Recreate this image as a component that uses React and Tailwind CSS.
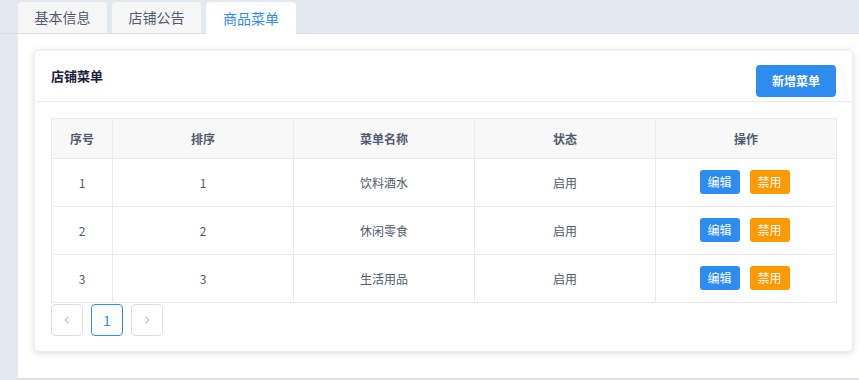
import React from 'react';

const rows = [
    { id: 1, sort: 1, name: '饮料酒水', status: '启用' },
    { id: 2, sort: 2, name: '休闲零食', status: '启用' },
    { id: 3, sort: 3, name: '生活用品', status: '启用' },
];

const tabs = ['基本信息', '店铺公告', '商品菜单'];

const App = () => {
    return (
        <div className="w-[859px] h-[380px] bg-[#e3e7ef] flex flex-col overflow-hidden" style={{ fontFamily: '"Noto Sans CJK SC", "Noto Sans", sans-serif' }}>
            {/* Tabs */}
            <div className="flex pl-[18px] pt-[2px] gap-[5px] h-[34px] border-b border-[#d7dbe2]">
                {tabs.map((t, i) => (
                    <div
                        key={t}
                        className={
                            i === 2
                                ? 'w-[90px] rounded-t-[4px] bg-white text-[#2d8cf0] text-[14px] flex items-center justify-center -mb-px h-[33px]'
                                : 'w-[89px] h-[31px] rounded-t-[4px] bg-[#f6f6f7] text-[#515a6e] text-[14px] flex items-center justify-center'
                        }
                    >
                        {t}
                    </div>
                ))}
            </div>

            {/* Content */}
            <div className="ml-[18px] bg-white h-[345px] border-b border-[#dcdee2] pt-[16px] pl-[16px] pr-[6px]">
                <div className="bg-white rounded-[4px] border border-[#eceef2] shadow-[0_1px_6px_rgba(0,0,0,0.15)] h-[302px]">
                    <div className="h-[51px] flex items-center justify-between pl-[16px] pr-[16px] border-b border-[#e8eaec]">
                        <span className="text-[13px] font-bold text-[#17233d]">店铺菜单</span>
                        <button className="w-[80px] h-[32px] mt-[10px] rounded-[4px] bg-[#2d8cf0] text-white text-[12px] font-bold">新增菜单</button>
                    </div>

                    <div className="pl-[16px] pr-[16px] pt-[16px]">
                        <table className="w-[786px] border-collapse border border-[#dcdee2] text-[12px] text-[#515a6e] table-fixed">
                            <colgroup>
                                <col className="w-[61px]" />
                                <col className="w-[181px]" />
                                <col className="w-[181px]" />
                                <col className="w-[181px]" />
                                <col className="w-[181px]" />
                            </colgroup>
                            <thead>
                                <tr className="h-[40px] bg-[#f8f8f9]">
                                    {['序号', '排序', '菜单名称', '状态', '操作'].map(h => (
                                        <th key={h} className="border border-[#e8eaec] font-bold text-center">{h}</th>
                                    ))}
                                </tr>
                            </thead>
                            <tbody>
                                {rows.map(r => (
                                    <tr key={r.id} className="h-[48px]">
                                        <td className="border border-[#e8eaec] text-center">{r.id}</td>
                                        <td className="border border-[#e8eaec] text-center">{r.sort}</td>
                                        <td className="border border-[#e8eaec] text-center">{r.name}</td>
                                        <td className="border border-[#e8eaec] text-center">{r.status}</td>
                                        <td className="border border-[#e8eaec] text-center">
                                            <div className="flex justify-center gap-[10px] pr-[3px] -mt-[2px]">
                                                <button className="w-[40px] h-[24px] rounded-[3px] bg-[#2d8cf0] text-white text-[12px]">编辑</button>
                                                <button className="w-[40px] h-[24px] rounded-[3px] bg-[#ff9900] text-white text-[12px]">禁用</button>
                                            </div>
                                        </td>
                                    </tr>
                                ))}
                            </tbody>
                        </table>

                        {/* Pagination */}
                        <div className="flex gap-[8px] mt-px">
                            <div className="w-[32px] h-[32px] rounded-[4px] border border-[#dcdee2] flex items-center justify-center text-[#c5c8ce]">
                                <svg width="10" height="10" viewBox="0 0 10 10"><path d="M6.5 1.5 L3 5 L6.5 8.5" fill="none" stroke="currentColor" strokeWidth="1.3" /></svg>
                            </div>
                            <div className="w-[32px] h-[32px] rounded-[4px] border border-[#2d8cf0] flex items-center justify-center text-[#2d8cf0] text-[14px]">1</div>
                            <div className="w-[32px] h-[32px] rounded-[4px] border border-[#dcdee2] flex items-center justify-center text-[#c5c8ce]">
                                <svg width="10" height="10" viewBox="0 0 10 10"><path d="M3.5 1.5 L7 5 L3.5 8.5" fill="none" stroke="currentColor" strokeWidth="1.3" /></svg>
                            </div>
                        </div>
                    </div>
                </div>
            </div>
        </div>
    );
};

export default App;
